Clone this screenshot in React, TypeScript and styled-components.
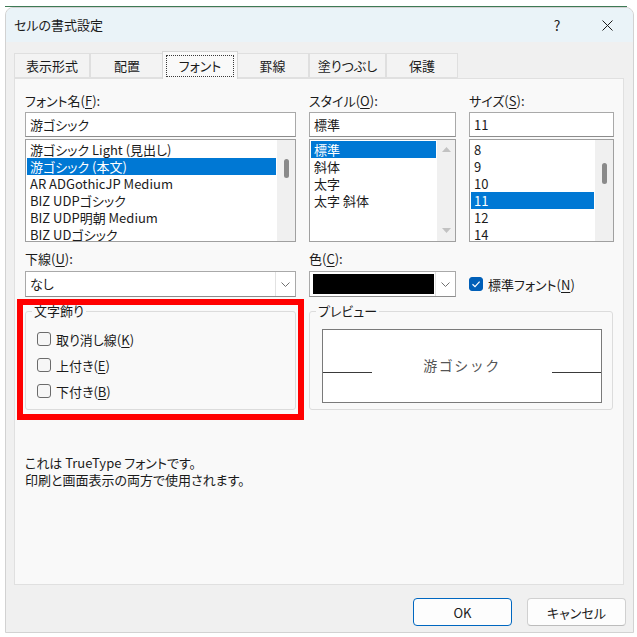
import styled, { createGlobalStyle } from "styled-components";

const GlobalStyle = createGlobalStyle`
  html, body {
    margin: 0;
    padding: 0;
    background: #ffffff;
  }
  body {
    font-family: "Noto Sans CJK JP", "Noto Sans", sans-serif;
    font-size: 13px;
    color: #1b1b1b;
    font-feature-settings: "palt";
  }
  * {
    box-sizing: border-box;
  }
`;

const Page = styled.div`
  width: 637px;
  height: 637px;
  padding: 6px 0 0 5px;
  overflow: hidden;
`;

const BehindEdge = styled.div`
  width: 622px;
  height: 1px;
  background: #3d7a55;
`;

const Window = styled.div`
  width: 629px;
  height: 626px;
  display: flex;
  flex-direction: column;
  background: #f0f0f0;
  border: 1px solid #d2d2d2;
  border-radius: 8px 8px 0 0;
  overflow: hidden;
`;

const TitleBar = styled.div`
  height: 34px;
  flex: none;
  display: flex;
  align-items: center;
  padding-left: 8px;
  background: #eaf3f8;
`;

const Title = styled.div`
  flex: 1;
  line-height: 18px;
`;

const CaptionButton = styled.div<{ $last?: boolean }>`
  width: 46px;
  height: 34px;
  display: flex;
  align-items: center;
  justify-content: center;
  font-size: 14px;
  color: #222;
  margin-right: ${(p) => (p.$last ? "3px" : "4px")};
`;

const TabRow = styled.div`
  margin-top: 10px;
  height: 26px;
  padding-left: 8px;
  display: flex;
  align-items: flex-end;
  flex: none;
`;

const Tab = styled.div<{ $w: number; $active?: boolean }>`
  position: relative;
  z-index: ${(p) => (p.$active ? 1 : 0)};
  width: ${(p) => (p.$active ? p.$w + 4 : p.$w)}px;
  height: ${(p) => (p.$active ? 28 : 25)}px;
  margin: ${(p) => (p.$active ? "0 -2px -1px" : "0")};
  padding: ${(p) => (p.$active ? "3px 3px 2px" : "0")};
  display: flex;
  align-items: stretch;
  justify-content: center;
  background: ${(p) => (p.$active ? "#f9f9f9" : "#f3f3f3")};
  border: 1px solid ${(p) => (p.$active ? "#d6d6d6" : "#dfdfdf")};
  border-bottom: ${(p) => (p.$active ? "none" : "1px solid #e0e0e0")};
  font-size: 13px;
`;

const TabText = styled.div<{ $focus?: boolean }>`
  flex: 1;
  display: flex;
  align-items: center;
  justify-content: center;
  line-height: 18px;
  border: 1px dotted ${(p) => (p.$focus ? "#3a3a3a" : "transparent")};
`;

const Panel = styled.div`
  margin-left: 8px;
  width: 610px;
  height: 507px;
  flex: none;
  background: #f9f9f9;
  border: 1px solid #e0e0e0;
  padding: 12px 0 0 10px;
`;

const ColumnGrid = styled.div<{ $top?: number }>`
  display: grid;
  grid-template-columns: 271px 147px 145px;
  column-gap: 13px;
  margin-top: ${(p) => p.$top ?? 0}px;
`;

const Field = styled.div`
  display: flex;
  flex-direction: column;
`;

const FieldLabel = styled.div<{ $h?: number }>`
  height: ${(p) => p.$h ?? 21}px;
  line-height: ${(p) => (p.$h ?? 21) - 2}px;
  white-space: nowrap;
`;

const Key = styled.span`
  text-decoration: underline;
  text-underline-offset: 2px;
`;

const TextBox = styled.div`
  height: 25px;
  background: #ffffff;
  border: 1px solid #a9a9a9;
  border-bottom-color: #8c8c8c;
  padding: 0 4px;
  line-height: 23px;
  white-space: nowrap;
`;

const ListBox = styled.div`
  margin-top: 2px;
  height: 103px;
  display: flex;
  background: #ffffff;
  border: 1px solid #a0a0a0;
  overflow: hidden;
`;

const ListItems = styled.div`
  flex: 1;
  padding: 1px;
  overflow: hidden;
`;

const ListItem = styled.div<{ $selected?: boolean }>`
  height: 17px;
  line-height: 17px;
  padding-left: 3px;
  white-space: nowrap;
  background: ${(p) => (p.$selected ? "#0078d4" : "transparent")};
  color: ${(p) => (p.$selected ? "#ffffff" : "#1b1b1b")};
`;

const ScrollTrack = styled.div<{ $arrows?: boolean }>`
  width: 18px;
  flex: none;
  background: #f0f0f0;
  display: flex;
  flex-direction: column;
  align-items: center;
  justify-content: ${(p) => (p.$arrows ? "space-between" : "flex-start")};
  padding: ${(p) => (p.$arrows ? "7px 0 8px" : "0")};
`;

const ScrollThumb = styled.div<{ $top: number; $h: number }>`
  margin-top: ${(p) => p.$top}px;
  width: 5px;
  height: ${(p) => p.$h}px;
  border-radius: 3px;
  background: #8a8a8a;
`;

const DropDown = styled.div`
  height: 26px;
  display: flex;
  background: #ffffff;
  border: 1px solid #a9a9a9;
  border-bottom-color: #8c8c8c;
`;

const DropValue = styled.div`
  flex: 1;
  padding-left: 4px;
  line-height: 24px;
`;

const SwatchSlot = styled.div`
  flex: 1;
  padding: 2px 1px 2px 3px;
  display: flex;
`;

const Swatch = styled.div<{ $color: string }>`
  flex: 1;
  background: ${(p) => p.$color};
`;

const DropButton = styled.div`
  width: 20px;
  flex: none;
  border-left: 1px solid #e2e2e2;
  display: flex;
  align-items: center;
  justify-content: center;
`;

const CheckCell = styled.div`
  display: flex;
  flex-direction: column;
  justify-content: flex-end;
`;

const CheckRow = styled.div<{ $indent?: number }>`
  height: 26px;
  display: flex;
  align-items: center;
  gap: 5px;
  padding-left: ${(p) => p.$indent ?? 0}px;
  white-space: nowrap;
`;

const Box = styled.div<{ $checked?: boolean }>`
  width: 14px;
  height: 14px;
  flex: none;
  border-radius: 3px;
  display: flex;
  align-items: center;
  justify-content: center;
  background: ${(p) => (p.$checked ? "#005fb8" : "#f6f6f6")};
  border: 1px solid ${(p) => (p.$checked ? "#005fb8" : "#6b6b6b")};
`;

const GroupRow = styled.div`
  margin-top: 7px;
  display: grid;
  grid-template-columns: 271px 304px;
  column-gap: 13px;
`;

const Highlight = styled.div`
  position: relative;
  &::after {
    content: "";
    position: absolute;
    top: -5px;
    left: -8px;
    right: -8px;
    bottom: -10px;
    border: 6px solid #ff0000;
    pointer-events: none;
  }
`;

const GroupBox = styled.fieldset<{ $pr?: number }>`
  margin: 0;
  min-width: 0;
  height: 106px;
  padding: 0 ${(p) => p.$pr ?? 6}px 0 6px;
  border: 1px solid #dcdcdc;
  border-radius: 3px;
`;

const GroupLegend = styled.legend`
  padding: 0 2px;
  line-height: 14px;
`;

const CheckList = styled.div`
  padding-top: 8px;
  display: flex;
  flex-direction: column;
`;

const PreviewBox = styled.div`
  margin: 11px 0 0 6px;
  height: 74px;
  display: flex;
  align-items: center;
  background: #ffffff;
  border: 1px solid #7a7a7a;
`;

const PreviewRule = styled.div`
  width: 49px;
  height: 1px;
  margin-top: 12px;
  background: #3a3a3a;
`;

const PreviewText = styled.div`
  flex: 1;
  text-align: center;
  font-size: 14px;
  line-height: 18px;
  margin-top: -3px;
  letter-spacing: 1.5px;
  color: #555555;
  font-feature-settings: normal;
`;

const InfoText = styled.div`
  margin-top: 44px;
  line-height: 17px;
`;

const ButtonRow = styled.div`
  margin-top: 13px;
  padding-right: 7px;
  display: flex;
  justify-content: flex-end;
  gap: 15px;
`;

const Button = styled.div<{ $primary?: boolean }>`
  width: 99px;
  height: 28px;
  display: flex;
  align-items: center;
  justify-content: center;
  border-radius: 4px;
  background: #fdfdfd;
  border: 1px solid ${(p) => (p.$primary ? "#0067c0" : "#d0d0d0")};
  border-bottom-color: ${(p) => (p.$primary ? "#0067c0" : "#bcbcbc")};
`;

const Chevron = () => (
  <svg width="9" height="5" viewBox="0 0 9 5">
    <path d="M0.5 0.5 L4.5 4.5 L8.5 0.5" fill="none" stroke="#707070" strokeWidth="1" />
  </svg>
);

const Arrow = ({ up }: { up?: boolean }) => (
  <svg width="9" height="5" viewBox="0 0 9 5">
    <path d={up ? "M0 5 L4.5 0 L9 5 Z" : "M0 0 L4.5 5 L9 0 Z"} fill="#c2c2c2" />
  </svg>
);

const tabs = [
  { label: "表示形式", w: 76 },
  { label: "配置", w: 74 },
  { label: "フォント", w: 72, active: true },
  { label: "罫線", w: 73 },
  { label: "塗りつぶし", w: 77 },
  { label: "保護", w: 72 },
];

const fonts = [
  "游ゴシック Light (見出し)",
  "游ゴシック (本文)",
  "AR ADGothicJP Medium",
  "BIZ UDPゴシック",
  "BIZ UDP明朝 Medium",
  "BIZ UDゴシック",
];

const styles = ["標準", "斜体", "太字", "太字 斜体"];
const sizes = ["8", "9", "10", "11", "12", "14"];

const effects = [
  { text: "取り消し線", key: "K" },
  { text: "上付き", key: "E" },
  { text: "下付き", key: "B" },
];

const App = () => {
  return (
    <Page>
      <GlobalStyle />
      <BehindEdge />
      <Window>
        <TitleBar>
          <Title>セルの書式設定</Title>
          <CaptionButton>?</CaptionButton>
          <CaptionButton $last>
            <svg width="11" height="11" viewBox="0 0 11 11">
              <path d="M0.5 0.5 L10.5 10.5 M10.5 0.5 L0.5 10.5" stroke="#1b1b1b" strokeWidth="1" />
            </svg>
          </CaptionButton>
        </TitleBar>

        <TabRow>
          {tabs.map((t) => (
            <Tab key={t.label} $w={t.w} $active={t.active}>
              <TabText $focus={t.active}>{t.label}</TabText>
            </Tab>
          ))}
        </TabRow>

        <Panel>
          <ColumnGrid>
            <Field>
              <FieldLabel>
                フォント名(<Key>F</Key>):
              </FieldLabel>
              <TextBox>游ゴシック</TextBox>
              <ListBox>
                <ListItems>
                  {fonts.map((f, i) => (
                    <ListItem key={f} $selected={i === 1}>
                      {f}
                    </ListItem>
                  ))}
                </ListItems>
                <ScrollTrack>
                  <ScrollThumb $top={19} $h={19} />
                </ScrollTrack>
              </ListBox>
            </Field>
            <Field>
              <FieldLabel>
                スタイル(<Key>O</Key>):
              </FieldLabel>
              <TextBox>標準</TextBox>
              <ListBox>
                <ListItems>
                  {styles.map((s, i) => (
                    <ListItem key={s} $selected={i === 0}>
                      {s}
                    </ListItem>
                  ))}
                </ListItems>
                <ScrollTrack $arrows>
                  <Arrow up />
                  <Arrow />
                </ScrollTrack>
              </ListBox>
            </Field>
            <Field>
              <FieldLabel>
                サイズ(<Key>S</Key>):
              </FieldLabel>
              <TextBox>11</TextBox>
              <ListBox>
                <ListItems>
                  {sizes.map((s) => (
                    <ListItem key={s} $selected={s === "11"}>
                      {s}
                    </ListItem>
                  ))}
                </ListItems>
                <ScrollTrack>
                  <ScrollThumb $top={23} $h={21} />
                </ScrollTrack>
              </ListBox>
            </Field>
          </ColumnGrid>

          <ColumnGrid $top={7}>
            <Field>
              <FieldLabel $h={22}>
                下線(<Key>U</Key>):
              </FieldLabel>
              <DropDown>
                <DropValue>なし</DropValue>
                <DropButton>
                  <Chevron />
                </DropButton>
              </DropDown>
            </Field>
            <Field>
              <FieldLabel $h={22}>
                色(<Key>C</Key>):
              </FieldLabel>
              <DropDown>
                <SwatchSlot>
                  <Swatch $color="#000000" />
                </SwatchSlot>
                <DropButton>
                  <Chevron />
                </DropButton>
              </DropDown>
            </Field>
            <CheckCell>
              <CheckRow>
                <Box $checked>
                  <svg width="10" height="10" viewBox="0 0 10 10">
                    <path d="M1.5 5.2 L4 7.6 L8.6 2.6" fill="none" stroke="#ffffff" strokeWidth="1.2" />
                  </svg>
                </Box>
                <span>
                  標準フォント(<Key>N</Key>)
                </span>
              </CheckRow>
            </CheckCell>
          </ColumnGrid>

          <GroupRow>
            <Highlight>
              <GroupBox>
                <GroupLegend>文字飾り</GroupLegend>
                <CheckList>
                  {effects.map((e) => (
                    <CheckRow key={e.key} $indent={5}>
                      <Box />
                      <span>
                        {e.text}(<Key>{e.key}</Key>)
                      </span>
                    </CheckRow>
                  ))}
                </CheckList>
              </GroupBox>
            </Highlight>
            <GroupBox $pr={10}>
              <GroupLegend>プレビュー</GroupLegend>
              <PreviewBox>
                <PreviewRule />
                <PreviewText>游ゴシック</PreviewText>
                <PreviewRule />
              </PreviewBox>
            </GroupBox>
          </GroupRow>

          <InfoText>
            これは TrueType フォントです。
            <br />
            印刷と画面表示の両方で使用されます。
          </InfoText>
        </Panel>

        <ButtonRow>
          <Button $primary>OK</Button>
          <Button>キャンセル</Button>
        </ButtonRow>
      </Window>
    </Page>
  );
};

export default App;
